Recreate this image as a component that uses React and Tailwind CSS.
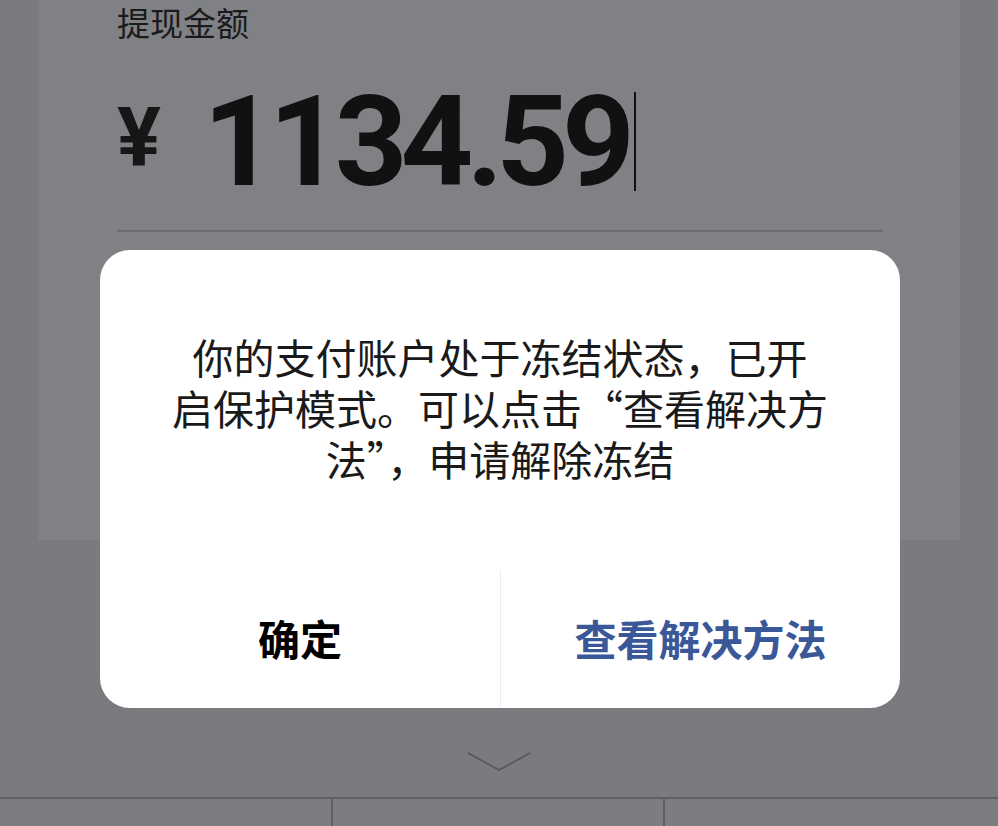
import React from 'react';

const cjk = { fontFamily: '"Noto Sans CJK SC", "Noto Sans", sans-serif' };

export default function App() {
  return (
    <div
      className="relative w-[998px] h-[826px] overflow-hidden bg-[#7a7b7e] text-[#161616]"
      style={cjk}
    >
      {/* page under the mask */}
      <div className="ml-[38px] w-[922px] h-[540px] bg-[#808185] pl-[79px]">
        <div className="pt-[2px] text-[33px] leading-[40px] text-[#1b1b1b]">提现金额</div>
        <div className="mt-[44px] flex items-center h-[110px]">
          <span className="font-['Roboto',sans-serif] font-bold text-[82px] leading-none mt-[-8px]">¥</span>
          <span className="ml-[42px] font-['Roboto',sans-serif] font-bold text-[127px] leading-none tracking-[-7px] text-[#111]">
            1134.59
          </span>
          <span className="ml-[6px] w-[2px] h-[99px] bg-[#111]" />
        </div>
        <div className="mt-[34px] w-[766px] h-[2px] bg-[#6c6d70]" />
      </div>

      <div className="h-[257px] flex items-end justify-center pb-[25px]">
        <svg width="64" height="20" viewBox="0 0 64 20" fill="none">
          <path d="M1 1 L32 18 L63 1" stroke="#58595c" strokeWidth="1.8" />
        </svg>
      </div>

      <div className="grid grid-cols-3 h-[30px] border-t-2 border-[#5f6063]">
        <div className="border-r-2 border-[#5f6063] bg-[#7c7d80]" />
        <div className="border-r-2 border-[#5f6063] bg-[#7c7d80]" />
        <div className="bg-[#7c7d80]" />
      </div>

      {/* dialog */}
      <div className="absolute left-[100px] top-[250px] w-[800px] h-[458px] bg-white rounded-[30px] flex flex-col">
        <div className="h-[320px] flex items-center justify-center pb-[6px]">
          <p className="text-center text-[41px] leading-[51px] text-[#1a1a1a]">
            你的支付账户处于冻结状态，已开
            <br />
            启保护模式。可以点击“查看解决方
            <br />
            法”，申请解除冻结
          </p>
        </div>
        <div className="flex-1 flex">
          <button className="w-1/2 flex items-center justify-center text-[42px] font-bold text-black pb-[4px]">
            确定
          </button>
          <button className="w-1/2 flex items-center justify-center border-l border-[#eceef2] text-[42px] font-semibold text-[#3a5898] pb-[4px]">
            查看解决方法
          </button>
        </div>
      </div>
    </div>
  );
}
